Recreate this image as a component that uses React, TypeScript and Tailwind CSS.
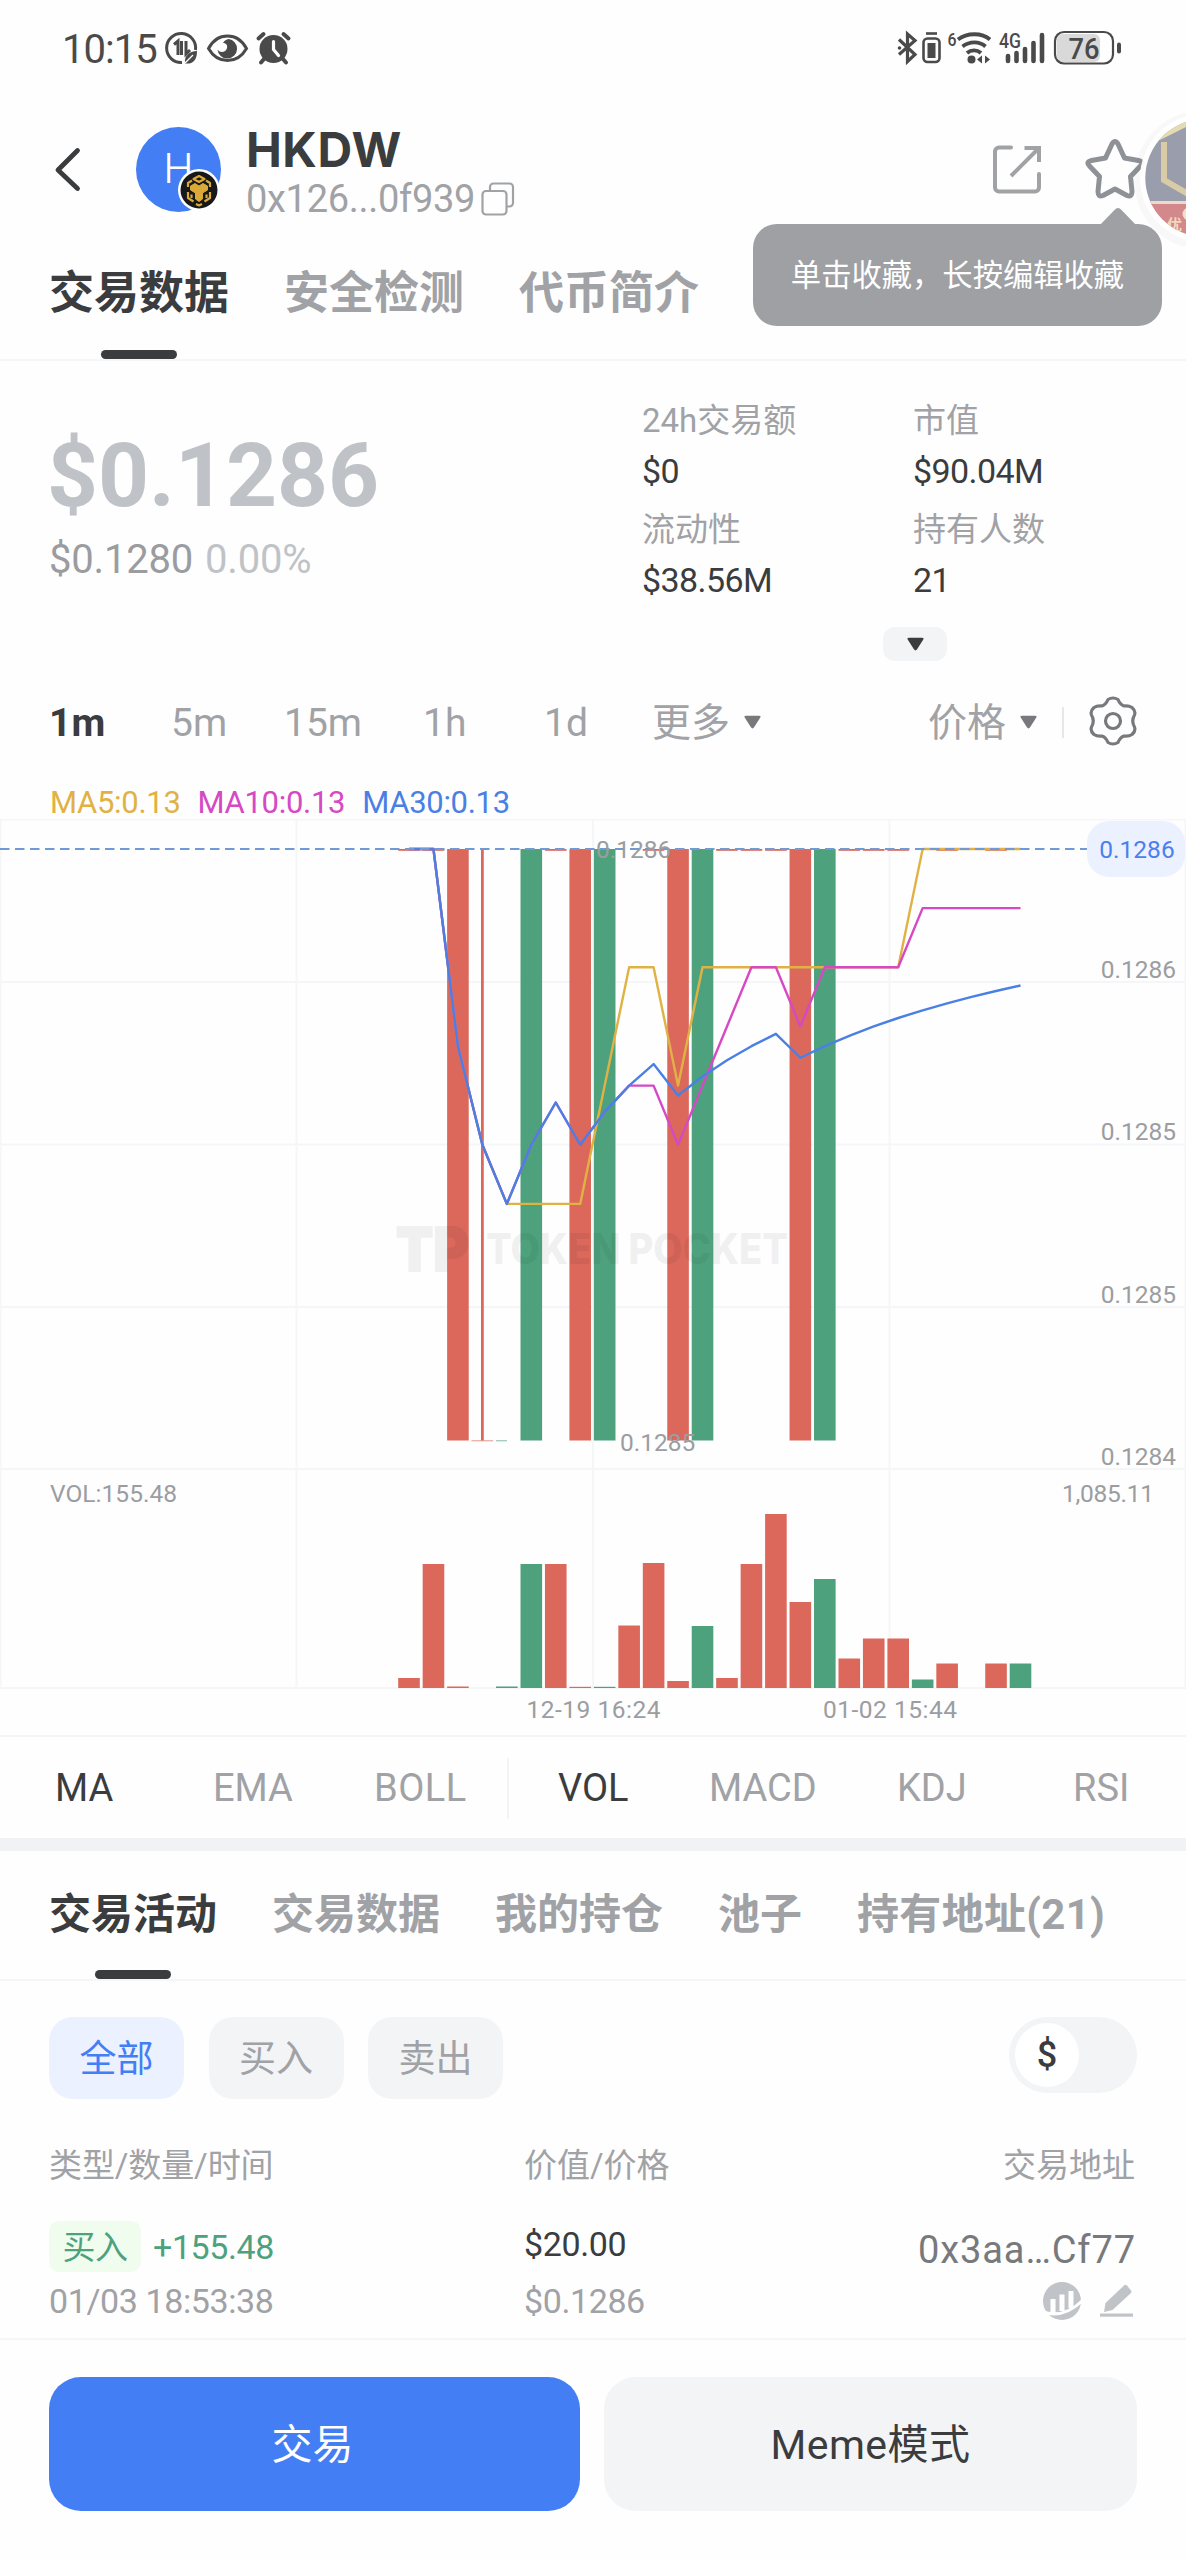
import type { ReactNode } from "react";
import clsx from "clsx";

const RED = "#db685b";
const GREEN = "#4ea17d";
const GRID = "#f5f6f7";

// One entry per candle: closing side, colour and volume height.
type Candle = { low?: boolean; body?: "full" | "wick" | "flat" | "none"; up?: boolean; vol: number };

const CANDLES: Candle[] = [
  { body: "flat", vol: 10 },
  { body: "flat", vol: 124 },
  { low: true, body: "full", vol: 1.5 },
  { low: true, body: "wick", vol: 0 },
  { low: true, body: "none", up: true, vol: 1.5 },
  { body: "full", up: true, vol: 124 },
  { body: "flat", vol: 124 },
  { low: true, body: "full", vol: 1.2 },
  { body: "full", up: true, vol: 1.2 },
  { body: "none", vol: 62.5 },
  { body: "flat", vol: 125 },
  { low: true, body: "full", vol: 7 },
  { body: "full", up: true, vol: 62 },
  { body: "flat", vol: 10 },
  { body: "flat", vol: 124 },
  { body: "flat", vol: 174 },
  { low: true, body: "full", vol: 86 },
  { body: "full", up: true, vol: 109 },
  { body: "flat", vol: 29.5 },
  { body: "flat", vol: 49.5 },
  { body: "flat", vol: 49.5 },
  { body: "none", up: true, vol: 8.5 },
  { body: "flat", vol: 24.5 },
  { body: "none", vol: 0 },
  { body: "flat", vol: 24.5 },
  { body: "none", up: true, vol: 24.5 },
];

const TOP = 30;
const BOTTOM = 621.5;
const VOL_BASE = 869;
const BAR = 21.6;

const cx = (i: number) => 409 + i * 24.46;

function movingAverage(period: number) {
  return CANDLES.map((_, i) => {
    const win = CANDLES.slice(Math.max(0, i - period + 1), i + 1);
    const lows = win.filter((c) => c.low).length;
    return `${cx(i)},${TOP + ((BOTTOM - TOP) * lows) / win.length}`;
  }).join(" ");
}

function Chart() {
  return (
    <svg width="1186" height="916" viewBox="0 0 1186 916" className="block" fontFamily="Roboto, sans-serif" fontSize="24.5">
      <g stroke={GRID} strokeWidth="2">
        {[0.5, 163, 325.5, 488, 650, 869].map((y) => (
          <line key={y} x1="0" x2="1186" y1={y} y2={y} />
        ))}
        {[0.5, 296.5, 593, 889.5, 1185.5].map((x) => (
          <line key={x} x1={x} x2={x} y1="0" y2="869" />
        ))}
      </g>

      {CANDLES.map((c, i) => {
        const fill = c.up ? GREEN : RED;
        return (
          <g key={i} fill={fill}>
            {c.body === "full" && <rect x={cx(i) - BAR / 2} y={TOP} width={BAR} height={BOTTOM - TOP} />}
            {c.body === "wick" && <rect x={cx(i) - 1.4} y={TOP} width="2.8" height={BOTTOM - TOP} />}
            {c.body === "flat" && <rect x={cx(i) - BAR / 2} y={TOP} width={BAR} height="1.8" />}
            <rect x={cx(i) - BAR / 2} y={VOL_BASE - c.vol} width={BAR} height={c.vol} />
          </g>
        );
      })}
      <rect x="471.5" y="621" width="21.6" height="1.4" fill={RED} opacity="0.5" />
      <rect x="496" y="621" width="11" height="1.4" fill={GREEN} opacity="0.5" />

      <g fill="none" strokeWidth="2.4" strokeLinejoin="round">
        <polyline points={movingAverage(5)} stroke="#e0b244" />
        <polyline points={movingAverage(10)} stroke="#d649c4" />
        <polyline points={movingAverage(30)} stroke="#4a80e4" />
      </g>
      <line x1="0" x2="1087" y1="30" y2="30" stroke="#6f9ad6" strokeWidth="2" strokeDasharray="9.5 5.5" />

      <g fill="#000" opacity="0.05" fontFamily="Inter, sans-serif" fontWeight="800">
        <text x="396" y="452" fontSize="61" fontWeight="900" stroke="#000" strokeWidth="2" textLength="73" lengthAdjust="spacingAndGlyphs">TP</text>
        <text x="486" y="445" fontSize="42" textLength="302" lengthAdjust="spacingAndGlyphs">TOKEN POCKET</text>
      </g>

      <g fill="#9b9da1">
        <text x="596" y="39">0.1286</text>
        <text x="620" y="632">0.1285</text>
        <text x="1176" y="159" textAnchor="end">0.1286</text>
        <text x="1176" y="321" textAnchor="end">0.1285</text>
        <text x="1176" y="484" textAnchor="end">0.1285</text>
        <text x="1176" y="646" textAnchor="end">0.1284</text>
        <text x="50" y="683" textLength="127">VOL:155.48</text>
        <text x="1154" y="683" textAnchor="end" textLength="92">1,085.11</text>
        <text x="593.5" y="899" textAnchor="middle" textLength="134">12-19 16:24</text>
        <text x="890" y="899" textAnchor="middle" textLength="134">01-02 15:44</text>
      </g>
      <rect x="1087" y="2" width="98" height="56" rx="22" fill="#ebf1fe" />
      <text x="1137" y="39" textAnchor="middle" fill="#4a80ee">0.1286</text>
    </svg>
  );
}

function StatusBar() {
  return (
    <div className="flex h-[96px] items-start justify-between pr-[62px] pl-[62px] text-[#4a4a4a]">
      <div className="flex pt-[29px]">
        <span className="w-[103px] text-[40px] leading-[41px] tracking-[-1px]">10:15</span>
        <svg width="130" height="38" viewBox="165 29 130 38" fill="none" stroke="#4a4a4a">
          <path d="M182 62.500A14.500 14.500 0 1 1 195.500 50" strokeWidth="3" />
          <path d="M174 44.500l4-3.500v14M181.500 41v14M186 41v13l4-4" strokeWidth="3" />
          <path d="M185 63.500c-1-8 4-12 12-12.500 0 8-3 13.500-12 12.500z" fill="#4a4a4a" stroke="none" />
          <path d="M185 63l8-8" stroke="#fff" strokeWidth="1.200" />
          <path d="M208.500 48.500c4-7.500 10-12.500 19-12.500s15 5 19 12.500c-4 7-10 12-19 12s-15-5-19-12z" strokeWidth="3" />
          <path d="M228.500 39a9.800 9.800 0 1 1-11 10.500c2.500 4 8.500 3 9.500-1.500 .8-3.500-1.500-5-4-5 1.500-2.500 3.500-3.700 5.500-4z" fill="#4a4a4a" stroke="none" />
          <circle cx="273.500" cy="49" r="14" fill="#4a4a4a" stroke="none" />
          <path d="M258.500 38.500l5-4.500M288.500 38.500l-5-4.500M264 59l-3 3.500M283 59l3 3.500" strokeWidth="4" strokeLinecap="round" />
          <path d="M273.500 41.500v8l5 6" stroke="#fff" strokeWidth="3.200" strokeLinecap="round" />
        </svg>
      </div>
      <svg width="228" height="40" viewBox="896 29 228 40" fill="none" stroke="#4a4a4a" className="mt-[29px]">
        <path d="M899 39.500l16 15-7.500 7V34l7.500 6.500-16 14" strokeWidth="3.200" />
        <circle cx="899.500" cy="48" r="1.800" fill="#4a4a4a" stroke="none" />
        <rect x="923.500" y="38.500" width="16" height="23.500" rx="4" strokeWidth="2.600" />
        <rect x="927.500" y="43" width="8" height="15" fill="#4a4a4a" stroke="none" />
        <path d="M926 33.500h11" strokeWidth="2.600" />
        <path d="M958 39.500c9-7 24-7 32 0M962.500 46.500c7-5.500 17-5.500 23 0M967 53c4-3.500 10-3.500 14 0" strokeWidth="3.800" />
        <circle cx="971.500" cy="59.500" r="4" fill="#4a4a4a" stroke="none" />
        <path d="M977 59.500l5-4v8zM990 59.500l-5-4v8z" fill="#4a4a4a" stroke="none" />
        <path d="M1008 56v5M1016.500 53v8M1025 49v12M1033.500 43v18M1042 35v26" strokeWidth="4.600" strokeLinecap="round" />
        <rect x="1057" y="34" width="43" height="28" rx="6" fill="#d9d9d9" stroke="none" />
        <rect x="1055" y="32" width="58" height="31.500" rx="9" strokeWidth="2.200" />
        <path d="M1119 44.500v7" strokeWidth="4" strokeLinecap="round" />
        <g fill="#4a4a4a" stroke="none" fontFamily="Roboto, sans-serif" fontWeight="500">
          <text x="947.500" y="46" fontSize="19" textLength="9" lengthAdjust="spacingAndGlyphs">6</text>
          <text x="999" y="47.500" fontSize="21" textLength="22" lengthAdjust="spacingAndGlyphs">4G</text>
          <text x="1068.500" y="58.500" fontSize="29" textLength="31" lengthAdjust="spacingAndGlyphs">76</text>
        </g>
      </svg>
    </div>
  );
}

function Header() {
  return (
    <header className="relative flex h-[144px] items-start">
      <svg width="28" height="46" viewBox="0 0 28 46" className="mt-[50px] ml-[54px]" fill="none" stroke="#3a3c3e" strokeWidth="4.800" strokeLinecap="round" strokeLinejoin="round">
        <path d="M23.500 4.500L4 24l19.500 18.500" />
      </svg>
      <div className="relative mt-[31px] ml-[54px] flex h-[85px] w-[85px] items-center justify-center rounded-full bg-[#437ef5] pb-[2px] font-[Inter] text-[41px] leading-none font-light text-white">
        H
        <svg width="42" height="42" viewBox="0 0 42 42" className="absolute top-[42px] left-[42px]">
          <circle cx="21" cy="21" r="21" fill="#fff" />
          <circle cx="21" cy="21" r="18.500" fill="#17181a" />
          <g fill="none" stroke="#dba937" strokeWidth="2.200" strokeLinejoin="round">
            <path d="M21 7l5.500 3-5.500 3-5.500-3zM14 11.500l-4 2.500v4M28 11.500l4 2.500v4M10 23v6l5.500 3.500M32 23v6l-5.500 3.500" />
            <path d="M12.500 17l4.500-2.500 4 2.500 4-2.500 4.500 2.500v4l-5 3v6l-3.500 2.500-3.500-2.500v-6l-5-3z" fill="#dba937" strokeWidth="1" />
            <path d="M13.500 25.500v3.500M28.500 25.500v3.500M18 35l3 1.500 3-1.500" />
          </g>
        </svg>
      </div>
      <div className="mt-[25px] ml-[25px]">
        <h1 className="font-[Inter] text-[48px] leading-[58px] font-bold tracking-[0.500px] text-[#3a3c3e]">HKDW</h1>
        <div className="flex h-[40px] items-center text-[38px] leading-[40px] tracking-[-0.300px] text-[#a0a2a6]">
          0x126...0f939
          <svg width="34" height="34" viewBox="0 0 34 34" className="ml-[6px]" fill="none" stroke="#a0a2a6" strokeWidth="2.200">
            <rect x="1.500" y="9" width="24" height="23.500" rx="3.500" />
            <path d="M9 8.500V5a3.500 3.500 0 0 1 3.500-3.500h16A3.500 3.500 0 0 1 32 5v16a3.500 3.500 0 0 1-3.500 3.500H26" />
          </svg>
        </div>
      </div>
      <svg width="50" height="50" viewBox="0 0 50 50" className="mt-[48px] ml-auto" fill="none" stroke="#a0a2a6" strokeWidth="4" strokeLinecap="round" strokeLinejoin="round">
        <path d="M19 3.500H7A4 4 0 0 0 3 7.500v36a4 4 0 0 0 4 4h36a4 4 0 0 0 4-4V30" />
        <path d="M32.500 4H47v14M46 5L19 32" strokeLinecap="butt" strokeLinejoin="miter" />
      </svg>
      <svg width="60" height="62" viewBox="0 0 60 62" className="mt-[42px] mr-[41px] ml-[43px]" fill="none" stroke="#8e9196" strokeWidth="5" strokeLinejoin="round">
        <path d="M27 6q3-5 6 0l6.500 14 14 2.500q6 1.500 2 5.500L45.500 38.500l1.500 15q0 6-5 4L30 51l-12 6.500q-5 2-5-4l1.500-15L4.500 28q-4-4 2-5.500l14-2.500z" />
      </svg>

      {/* floating shortcut, half off the right edge */}
      <div className="absolute top-0 right-0 h-[150px] w-[70px] overflow-hidden">
        <svg width="70" height="170" viewBox="1116 96 70 170">
          <circle cx="1204" cy="180" r="70" fill="#000" opacity="0.025" />
          <circle cx="1204" cy="178" r="64" fill="#fff" opacity="0.95" />
          <clipPath id="floatClip">
            <circle cx="1204" cy="178" r="58.700" />
          </clipPath>
          <g clipPath="url(#floatClip)">
            <rect x="1140" y="115" width="50" height="90" fill="#9a9dab" />
            <path d="M1160 140v-8l28-16v10z" fill="#e4dbb0" />
            <path d="M1164 142v38l24 14" fill="none" stroke="#d9cba6" strokeWidth="6" />
            <rect x="1140" y="201" width="50" height="40" fill="#d3888b" />
            <path d="M1140 201h50v3h-50z" fill="#e9dccb" />
            <circle cx="1189" cy="214" r="6.500" fill="#f0e2c4" />
            <text x="1167" y="230" fontSize="15" fontWeight="700" fontFamily="'Noto Sans CJK SC', sans-serif" fill="#f0d8bd">优</text>
          </g>
        </svg>
      </div>

      <div className="absolute top-[128px] left-[753px] flex h-[102px] w-[409px] items-center justify-center rounded-[24px] bg-[#9ea0a4] pt-[2px] text-[30.300px] leading-none whitespace-nowrap text-white">
        <svg width="36" height="18" viewBox="0 0 36 18" className="absolute top-[-17px] left-[347px]">
          <path d="M0 18L14.500 3q3.500-4 7 0L36 18z" fill="#9ea0a4" />
        </svg>
        单击收藏，长按编辑收藏
      </div>
    </header>
  );
}

function Caret({ className }: { className?: string }) {
  return (
    <svg width="17" height="14" viewBox="0 0 16 13" className={className}>
      <path d="M2 .5h12q2.500 0 1.200 2L9.500 11.500q-1.500 2-3 0L.8 2.500Q-.5.5 2 .5z" fill="currentColor" />
    </svg>
  );
}

function Stat({ label, value }: { label: string; value: string }) {
  return (
    <div className="h-[109px] w-[271px]">
      <div className="flex h-[50px] items-center text-[33px] leading-none text-[#a0a2a6]">{label}</div>
      <div className="flex h-[52px] items-center text-[34px] leading-none tracking-[-0.600px] text-[#3a3c3e]">{value}</div>
    </div>
  );
}

function Summary() {
  return (
    <section className="flex h-[319px] pl-[49px]">
      <div className="w-[593px] shrink-0 pt-[69px]">
        <div className="ml-[-2px] text-[89px] leading-[92px] font-bold text-[#bfc3c7]">$0.1286</div>
        <div className="mt-[13px] flex gap-[12px] text-[40px] leading-[50px] tracking-[-0.200px]">
          <span className="text-[#9a9c9f]">$0.1280</span>
          <span className="text-[#bfc3c7]">0.00%</span>
        </div>
      </div>
      <div className="shrink-0">
        <div className="flex pt-[34px]">
          <Stat label="24h交易额" value="$0" />
          <Stat label="市值" value="$90.04M" />
        </div>
        <div className="flex">
          <Stat label="流动性" value="$38.56M" />
          <Stat label="持有人数" value="21" />
        </div>
        <div className="mt-[14px] ml-[241px] flex h-[34px] w-[64px] items-center justify-center rounded-[12px] bg-[#f3f4f6] text-[#3a3c3e]">
          <Caret />
        </div>
      </div>
    </section>
  );
}

const INTERVALS = [
  { label: "1m", className: "w-[122px] font-bold text-[#3a3c3e]" },
  { label: "5m", className: "w-[113px]" },
  { label: "15m", className: "w-[139px]" },
  { label: "1h", className: "w-[121px]" },
  { label: "1d", className: "w-[107px]" },
];

function IntervalBar() {
  return (
    <div className="flex h-[85px] items-center pt-[1px] pl-[49px] text-[39px] leading-none text-[#a0a2a6]">
      {INTERVALS.map((t) => (
        <span key={t.label} className={t.className}>{t.label}</span>
      ))}
      <span className="ml-[1px] w-[92px]">更多</span>
      <Caret className="mb-[2px] text-[#77797c]" />
      <span className="ml-[167px] w-[92px]">价格</span>
      <Caret className="mb-[2px] text-[#77797c]" />
      <i className="mb-[2px] ml-[25px] h-[31px] w-[2px] bg-[#e6e7e9]" />
      <svg width="48" height="50" viewBox="0 0 48 50" className="mb-[5px] ml-[25px]" fill="none" stroke="#77797c" strokeWidth="3.200" strokeLinejoin="round">
        <path d="M19 3.500Q24 .5 29 3.500Q31 8.500 35 10Q40 9.500 43 11.500Q47 15 45.500 19Q42 25 45.500 31Q47 35 43 38.500Q40 40.500 35 40Q31 41.500 29 46.500Q24 49.500 19 46.500Q17 41.500 13 40Q8 40.500 5 38.500Q1 35 2.500 31Q6 25 2.500 19Q1 15 5 11.500Q8 9.500 13 10Q17 8.500 19 3.500z" />
        <circle cx="24" cy="25" r="7.500" />
      </svg>
    </div>
  );
}

function Indicator({ children, active, className }: { children: ReactNode; active?: boolean; className?: string }) {
  return <span className={clsx(className, active ? "text-[#3a3c3e]" : "text-[#a0a2a6]")}>{children}</span>;
}

function Tab({ children, active }: { children: ReactNode; active?: boolean }) {
  return (
    <div className={clsx("flex h-full flex-col items-center justify-between", active ? "text-[#3a3c3e]" : "text-[#a0a2a6]")}>
      {children}
      {active && <i className="h-[9px] w-[76px] rounded-full bg-[#3a3c3e]" />}
    </div>
  );
}

function Activity() {
  return (
    <section className="h-[359px] border-b-2 border-[#f5f6f7] px-[49px] pt-[36px]">
      <div className="flex items-start gap-[24.500px] text-[37px] leading-none">
        <div className="flex h-[82px] w-[135px] items-center justify-center rounded-[24px] bg-[#ebf1fe] pt-[3px] text-[#437ef5]">全部</div>
        <div className="flex h-[82px] w-[135px] items-center justify-center rounded-[24px] bg-[#f3f4f6] pt-[3px] text-[#a0a2a6]">买入</div>
        <div className="flex h-[82px] w-[135px] items-center justify-center rounded-[24px] bg-[#f3f4f6] pt-[3px] text-[#a0a2a6]">卖出</div>
        <div className="ml-auto flex h-[76px] w-[128px] items-center rounded-full bg-[#f3f4f6] pl-[6px]">
          <div className="flex h-[64px] w-[64px] items-center justify-center rounded-full bg-white text-[36px] font-medium text-[#3a3c3e]">$</div>
        </div>
      </div>
      <div className="mt-[46px] flex h-[40px] items-center text-[33px] leading-none text-[#a0a2a6]">
        <span className="w-[475px] tracking-[-0.100px]">类型/数量/时间</span>
        <span>价值/价格</span>
        <span className="mr-[2px] ml-auto">交易地址</span>
      </div>
      <div className="mt-[36px] flex text-[34px] leading-none tracking-[-0.400px] text-[#a0a2a6]">
        <div className="w-[475px]">
          <div className="flex items-center gap-[12px] text-[#4ea17d]">
            <span className="flex h-[51px] w-[92px] items-center justify-center rounded-[10px] bg-[#f0fcee] pt-[2px] text-[33px]">买入</span>
            <span>+155.48</span>
          </div>
          <div className="mt-[12px]">01/03 18:53:38</div>
        </div>
        <div>
          <div className="h-[51px] pt-[6px] text-[#3a3c3e]">$20.00</div>
          <div className="mt-[12px]">$0.1286</div>
        </div>
        <div className="ml-auto flex flex-col items-end">
          <div className="h-[60px] pt-[10px] pr-[1px] text-[38px] tracking-[0.900px] text-[#77797c]">0x3aa…Cf77</div>
          <div className="flex gap-[18px] pr-[3px]">
            <svg width="40" height="40" viewBox="0 0 40 40">
              <circle cx="20" cy="20" r="19" fill="#c0c4c8" />
              <path d="M8.500 18h5v15h-5zM17.500 13.500h5V30h-5zM26.500 10h5v17h-5z" fill="#fff" />
              <path d="M1 31c15 5 28 0 40-12" fill="none" stroke="#fff" strokeWidth="3" />
            </svg>
            <svg width="34" height="40" viewBox="0 0 34 40" fill="#c0c4c8">
              <path d="M4 31l1.500-9L24 4.500q1.500-1.500 3 0l4 5q1 1.500-.5 3L12.500 29z" />
              <rect x="0" y="32.500" width="33" height="3.200" />
            </svg>
          </div>
        </div>
      </div>
    </section>
  );
}

export default function App() {
  return (
    <main className="flex h-[2560px] w-[1186px] flex-col overflow-hidden bg-[#fefefe] font-[Roboto,'Noto_Sans_CJK_SC',sans-serif]">
      <StatusBar />
      <Header />
      <nav className="flex h-[121px] gap-[55px] border-b-2 border-[#f5f6f7] pt-[31px] pl-[49px] text-[45px] leading-[46px] font-bold">
        <Tab active>交易数据</Tab>
        <Tab>安全检测</Tab>
        <Tab>代币简介</Tab>
      </nav>
      <Summary />
      <IntervalBar />
      <div className="flex h-[54px] items-center gap-[17px] pt-[20px] pl-[50px] text-[31px] leading-none tracking-[-0.300px]">
        <span className="text-[#e0b244]">MA5:0.13</span>
        <span className="text-[#d649c4]">MA10:0.13</span>
        <span className="text-[#4a80e4]">MA30:0.13</span>
      </div>
      <Chart />
      <div className="flex h-[103px] items-center border-t-2 border-[#f3f4f6] pt-[1px] pl-[55px] text-[38px] leading-none">
        <Indicator active className="w-[158px]">MA</Indicator>
        <Indicator className="w-[161px]">EMA</Indicator>
        <Indicator className="w-[133px] tracking-[0.500px]">BOLL</Indicator>
        <i className="h-[61px] w-[2px] bg-[#f3f4f6]" />
        <Indicator active className="ml-[49px] w-[151px]">VOL</Indicator>
        <Indicator className="w-[188px]">MACD</Indicator>
        <Indicator className="w-[176px]">KDJ</Indicator>
        <Indicator>RSI</Indicator>
      </div>
      <div className="h-[13px] bg-[#f0f2f5]" />
      <nav className="flex h-[130px] gap-[55px] border-b-2 border-[#f5f6f7] pt-[42px] pl-[49px] text-[42px] leading-[44px] font-bold">
        <Tab active>交易活动</Tab>
        <Tab>交易数据</Tab>
        <Tab>我的持仓</Tab>
        <Tab>池子</Tab>
        <Tab>
          <span className="tracking-[0.300px]">持有地址(21)</span>
        </Tab>
      </nav>
      <Activity />
      <footer className="flex gap-[24px] px-[49px] pt-[37px] text-[41px] leading-none">
        <button className="flex h-[134px] w-[531px] items-center justify-center rounded-[32px] bg-[#437ef5] pt-[3px] pr-[4px] text-white">交易</button>
        <button className="flex h-[134px] flex-1 items-center justify-center rounded-[32px] bg-[#f3f4f6] pt-[3px] tracking-[0.500px] text-[#3a3c3e]">Meme模式</button>
      </footer>
    </main>
  );
}
